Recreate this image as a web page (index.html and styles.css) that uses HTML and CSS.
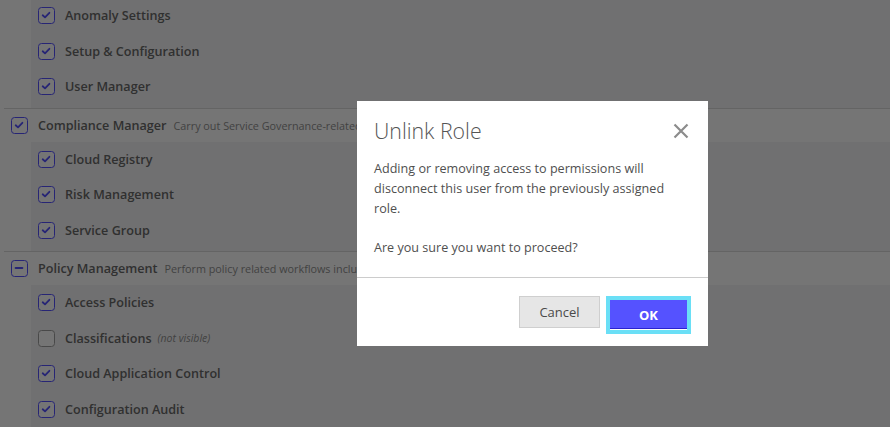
FILE: index.html
```html
<!DOCTYPE html>
<html lang="en">
<head>
    <meta charset="UTF-8">
    <title>Permissions - Unlink Role</title>
    <link rel="stylesheet" href="styles.css">
</head>
<body>
    <div class="page">
        <div class="group first">
            <div class="children">
                <div class="row"><span class="check on"><svg viewBox="0 0 17 17"><path d="M4.5 8.8 L7.3 11.4 L12.6 5.8"/></svg></span>Anomaly Settings</div>
                <div class="row"><span class="check on"><svg viewBox="0 0 17 17"><path d="M4.5 8.8 L7.3 11.4 L12.6 5.8"/></svg></span>Setup &amp; Configuration</div>
                <div class="row"><span class="check on"><svg viewBox="0 0 17 17"><path d="M4.5 8.8 L7.3 11.4 L12.6 5.8"/></svg></span>User Manager</div>
            </div>
        </div>

        <div class="group">
            <div class="group-head">
                <span class="check on"><svg viewBox="0 0 17 17"><path d="M4.5 8.8 L7.3 11.4 L12.6 5.8"/></svg></span>
                <span class="group-title">Compliance Manager</span>
                <span class="group-desc">Carry out Service Governance-related workflows</span>
            </div>
            <div class="children">
                <div class="row"><span class="check on"><svg viewBox="0 0 17 17"><path d="M4.5 8.8 L7.3 11.4 L12.6 5.8"/></svg></span>Cloud Registry</div>
                <div class="row"><span class="check on"><svg viewBox="0 0 17 17"><path d="M4.5 8.8 L7.3 11.4 L12.6 5.8"/></svg></span>Risk Management</div>
                <div class="row"><span class="check on"><svg viewBox="0 0 17 17"><path d="M4.5 8.8 L7.3 11.4 L12.6 5.8"/></svg></span>Service Group</div>
            </div>
        </div>

        <div class="group">
            <div class="group-head">
                <span class="check on"><svg viewBox="0 0 17 17"><path class="dash" d="M4.5 8.5 L12.5 8.5"/></svg></span>
                <span class="group-title">Policy Management</span>
                <span class="group-desc">Perform policy related workflows including access and audit</span>
            </div>
            <div class="children">
                <div class="row"><span class="check on"><svg viewBox="0 0 17 17"><path d="M4.5 8.8 L7.3 11.4 L12.6 5.8"/></svg></span>Access Policies</div>
                <div class="row"><span class="check"></span>Classifications <em class="note">(not visible)</em></div>
                <div class="row"><span class="check on"><svg viewBox="0 0 17 17"><path d="M4.5 8.8 L7.3 11.4 L12.6 5.8"/></svg></span>Cloud Application Control</div>
                <div class="row"><span class="check on"><svg viewBox="0 0 17 17"><path d="M4.5 8.8 L7.3 11.4 L12.6 5.8"/></svg></span>Configuration Audit</div>
            </div>
        </div>
    </div>

    <!-- Confirm dialog -->
    <div class="overlay"></div>
    <div class="modal">
        <div class="modal-header">
            <h2>Unlink Role</h2>
            <span class="close"><svg viewBox="0 0 16 16"><path d="M1.5 1.5 L14.5 14.5 M14.5 1.5 L1.5 14.5"/></svg></span>
        </div>
        <div class="modal-body">
            <p>Adding or removing access to permissions will disconnect this user from the previously assigned role.</p>
            <p class="ask">Are you sure you want to proceed?</p>
        </div>
        <div class="modal-footer">
            <button class="btn btn-cancel">Cancel</button>
            <button class="btn btn-ok">OK</button>
        </div>
    </div>
</body>
</html>
```

FILE: styles.css
```css
:root {
    --primary-color: #5552ff;
    --text-color: #6a6a6a;
    --muted-color: #909090;
    --line-color: #dadada;
    --nested-bg: #f5f5f6;
}

* {
    margin: 0;
    padding: 0;
    box-sizing: border-box;
}

body {
    font-family: 'Open Sans', 'Liberation Sans', sans-serif;
    background-color: #ffffff;
    color: var(--text-color);
    overflow: hidden;
}

.page {
    margin-top: -2px;
}

.group {
    margin-left: 4px;
    border-top: 1px solid var(--line-color);
}

.group.first {
    border-top: none;
}

.group-head {
    max-width: 353px;
    height: 33px;
    display: flex;
    align-items: center;
    padding-left: 7px;
    white-space: nowrap;
    overflow: hidden;
}

.group-title {
    margin-left: 10px;
    font-size: 12.6px;
    font-weight: 600;
}

.group-desc {
    margin-left: 7px;
    font-size: 10.8px;
    color: var(--muted-color);
}

.children {
    margin-left: 27px;
    padding-bottom: 3px;
    background-color: var(--nested-bg);
}

.row {
    height: 35.5px;
    display: flex;
    align-items: center;
    gap: 10px;
    padding-left: 7px;
    font-size: 12.6px;
    font-weight: 600;
    white-space: nowrap;
}

.note {
    margin-left: -4px;
    font-size: 10.5px;
    font-weight: 400;
    color: var(--muted-color);
}

/* checkboxes */
.check {
    width: 17px;
    height: 17px;
    flex-shrink: 0;
    border: 1.5px solid #a0a0a0;
    border-radius: 3.5px;
    background: #ffffff;
    display: flex;
}

.check.on {
    border-color: var(--primary-color);
}

.check svg {
    width: 14px;
    height: 14px;
    fill: none;
    stroke: var(--primary-color);
    stroke-width: 2.2;
    stroke-linecap: round;
    stroke-linejoin: round;
}

.check svg .dash {
    stroke-width: 2.6;
}

/* dialog */
.overlay {
    position: fixed;
    inset: 0;
    background: rgba(0, 0, 0, 0.54);
}

.modal {
    position: fixed;
    left: 357px;
    top: 101px;
    width: 351px;
    height: 245px;
    background: #ffffff;
}

.modal-header {
    display: flex;
    justify-content: space-between;
    align-items: center;
    padding: 15px 19px 0 17px;
}

.modal-header h2 {
    font-size: 21.3px;
    font-weight: 300;
    line-height: 29px;
    color: #555;
}

.close {
    width: 16px;
    height: 16px;
    display: flex;
}

.close svg {
    width: 16px;
    height: 16px;
    stroke: #8c8c8c;
    stroke-width: 2.2;
    fill: none;
}

.modal-body {
    padding: 14px 17px 19px;
    font-size: 12.6px;
    line-height: 20px;
    color: #4f4f4f;
    border-bottom: 1px solid #cccccc;
}

.modal-body .ask {
    margin-top: 19px;
}

.modal-footer {
    display: flex;
    justify-content: flex-end;
    align-items: flex-start;
    padding: 18px 21px 0 0;
}

.btn {
    font-family: inherit;
    font-size: 13px;
    border: none;
    cursor: pointer;
}

.btn-cancel {
    width: 81px;
    height: 32px;
    background: #e6e6e6;
    border: 1px solid #cfcfcf;
    color: #4a4a4a;
}

.btn-ok {
    width: 77px;
    height: 30px;
    margin: 4px 0 0 10px;
    background: var(--primary-color);
    color: #ffffff;
    font-weight: 700;
    box-shadow: inset 0 -1px 0 #ffffff, inset 0 -2px 0 #2a22d0, 0 0 0 4px #6adff6;
}
```
